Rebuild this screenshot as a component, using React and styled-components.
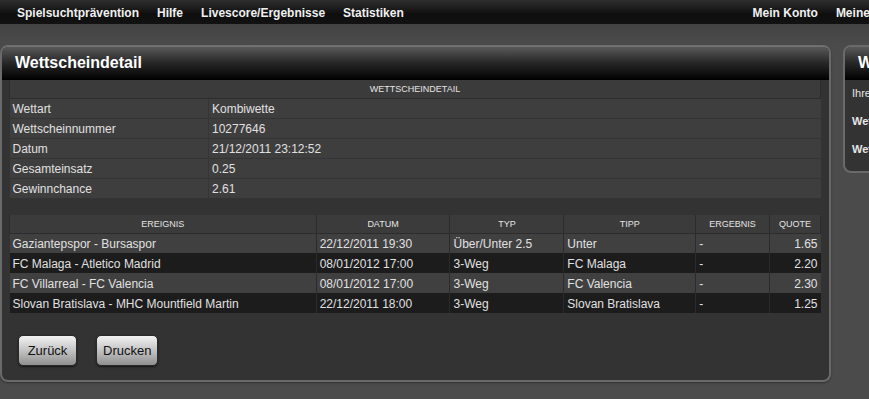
import React from "react";
import styled, { createGlobalStyle } from "styled-components";

const GlobalStyle = createGlobalStyle`
  html, body {
    margin: 0;
    padding: 0;
    background: #4b4b4b;
    font-family: "Liberation Sans", Arial, sans-serif;
    overflow: hidden;
  }
`;

const details = [
  ["Wettart", "Kombiwette"],
  ["Wettscheinnummer", "10277646"],
  ["Datum", "21/12/2011 23:12:52"],
  ["Gesamteinsatz", "0.25"],
  ["Gewinnchance", "2.61"],
];

const events = [
  ["Gaziantepspor - Bursaspor", "22/12/2011 19:30", "Über/Unter 2.5", "Unter", "-", "1.65"],
  ["FC Malaga - Atletico Madrid", "08/01/2012 17:00", "3-Weg", "FC Malaga", "-", "2.20"],
  ["FC Villarreal - FC Valencia", "08/01/2012 17:00", "3-Weg", "FC Valencia", "-", "2.30"],
  ["Slovan Bratislava - MHC Mountfield Martin", "22/12/2011 18:00", "3-Weg", "Slovan Bratislava", "-", "1.25"],
];

const columns = [
  { label: "Ereignis", width: 307 },
  { label: "Datum", width: 134 },
  { label: "Typ", width: 114 },
  { label: "Tipp", width: 132 },
  { label: "Ergebnis", width: 74 },
  { label: "Quote", width: 51, right: true },
];

export default function App() {
  return (
    <Page>
      <GlobalStyle />
      <TopBar>
        <NavGroup>
          <NavLink>Spielsuchtprävention</NavLink>
          <NavLink>Hilfe</NavLink>
          <NavLink>Livescore/Ergebnisse</NavLink>
          <NavLink>Statistiken</NavLink>
        </NavGroup>
        <NavGroup $right>
          <NavLink>Mein Konto</NavLink>
          <NavLink>Meine Wetten</NavLink>
        </NavGroup>
      </TopBar>

      <Content>
        <Panel>
          <PanelHeader>Wettscheindetail</PanelHeader>
          <PanelBody>
            <DetailTable>
              <thead>
                <tr>
                  <HeadCell colSpan={2}>Wettscheindetail</HeadCell>
                </tr>
              </thead>
              <tbody>
                {details.map(([k, v]) => (
                  <DetailRow key={k}>
                    <DetailCell style={{ width: 199 }}>{k}</DetailCell>
                    <DetailCell>{v}</DetailCell>
                  </DetailRow>
                ))}
              </tbody>
            </DetailTable>

            <EventTable>
              <thead>
                <tr>
                  {columns.map((c) => (
                    <HeadCell key={c.label} style={{ width: c.width }}>
                      {c.label}
                    </HeadCell>
                  ))}
                </tr>
              </thead>
              <tbody>
                {events.map((row, i) => (
                  <EventRow key={row[0]} $dark={i % 2 === 1}>
                    {row.map((cell, j) => (
                      <EventCell key={j} $right={columns[j].right}>
                        {cell}
                      </EventCell>
                    ))}
                  </EventRow>
                ))}
              </tbody>
            </EventTable>

            <Buttons>
              <Button>Zurück</Button>
              <Button>Drucken</Button>
            </Buttons>
          </PanelBody>
        </Panel>

        <SidePanel>
          <PanelHeader>Wettschein</PanelHeader>
          <SideList>
            <SideItem>Ihre Wettscheine</SideItem>
            <SideItem $bold>Wettscheine offen</SideItem>
            <SideItem $bold>Wettscheine beendet</SideItem>
          </SideList>
        </SidePanel>
      </Content>
    </Page>
  );
}

const Page = styled.div`
  width: 869px;
  height: 399px;
  overflow: hidden;
  background: linear-gradient(#434343 24px, #4b4b4b 45px);
`;

const TopBar = styled.div`
  height: 24px;
  display: flex;
  justify-content: space-between;
  align-items: center;
  background: linear-gradient(#2e2e2e, #0e0e0e 60%, #121212);
  white-space: nowrap;
  overflow: hidden;
`;

const NavGroup = styled.div`
  display: flex;
  padding-left: ${(p) => (p.$right ? "0" : "17px")};
  margin-right: ${(p) => (p.$right ? "-62px" : "0")};
`;

const NavLink = styled.span`
  color: #f0f0f0;
  font-size: 12px;
  font-weight: bold;
  margin-right: 18px;
  padding-top: 1px;
`;

const Content = styled.div`
  display: flex;
  align-items: flex-start;
  gap: 12px;
  padding-top: 21px;
`;

const Panel = styled.div`
  flex: 0 0 831px;
  box-sizing: border-box;
  height: 337px;
  border: 2px solid #6a6a6a;
  border-top-color: #707070;
  border-radius: 8px;
  background: #333333;
  overflow: hidden;
  box-shadow: 0 1px 2px rgba(0, 0, 0, 0.35);
`;

const PanelHeader = styled.div`
  height: 33px;
  box-sizing: border-box;
  padding: 7px 0 0 13px;
  color: #ffffff;
  font-size: 16px;
  font-weight: bold;
  background: linear-gradient(#595959, #2a2a2a 45%, #000000);
  white-space: nowrap;
`;

const PanelBody = styled.div`
  padding: 0 8px 0 7px;
`;

const BaseTable = styled.table`
  width: 812px;
  border-collapse: collapse;
  font-size: 12px;
  color: #e0e0e0;
`;

const DetailTable = styled(BaseTable)``;

const EventTable = styled(BaseTable)`
  margin-top: 17px;
`;

const HeadCell = styled.th`
  height: 18px;
  padding: 0;
  font-size: 9px;
  font-weight: normal;
  text-transform: uppercase;
  text-align: center;
  color: #e4e4e4;
  background: #3b3b3b;
  border: 1px solid #2c2c2c;
  border-top: none;
  box-sizing: border-box;
`;

const DetailRow = styled.tr`
  background: #3e3e3e;
`;

const DetailCell = styled.td`
  height: 20px;
  box-sizing: border-box;
  padding: 1px 3px 0;
  border-top: 1px solid #343434;
  border-left: 1px solid #363636;
  &:first-child {
    border-left: none;
  }
`;

const EventRow = styled.tr`
  background: ${(p) => (p.$dark ? "#1c1c1c" : "#404040")};
`;

const EventCell = styled.td`
  height: 20px;
  box-sizing: border-box;
  padding: 1px 3px 0;
  border-left: 1px solid #2b2b2b;
  text-align: ${(p) => (p.$right ? "right" : "left")};
  white-space: nowrap;
  &:first-child {
    border-left: none;
  }
`;

const Buttons = styled.div`
  display: flex;
  gap: 19px;
  padding: 22px 0 0 9px;
`;

const Button = styled.button`
  height: 31px;
  min-width: 59px;
  padding: 0 6px;
  border: 1px solid #2a2a2a;
  border-radius: 5px;
  font-family: "Liberation Sans", Arial, sans-serif;
  font-size: 13px;
  color: #111;
  background: linear-gradient(#f2f2f2, #c8c8c8 45%, #8f8f8f);
  box-shadow: 0 1px 2px rgba(0, 0, 0, 0.6);
`;

const SidePanel = styled.div`
  flex: 0 0 200px;
  box-sizing: border-box;
  height: 128px;
  border: 2px solid #6a6a6a;
  border-radius: 8px;
  background: #333333;
  overflow: hidden;
`;

const SideList = styled.div`
  display: flex;
  flex-direction: column;
  padding: 7px 0 0 7px;
  gap: 16px;
`;

const SideItem = styled.div`
  color: #e6e6e6;
  font-size: 11px;
  font-weight: ${(p) => (p.$bold ? "bold" : "normal")};
  white-space: nowrap;
`;
